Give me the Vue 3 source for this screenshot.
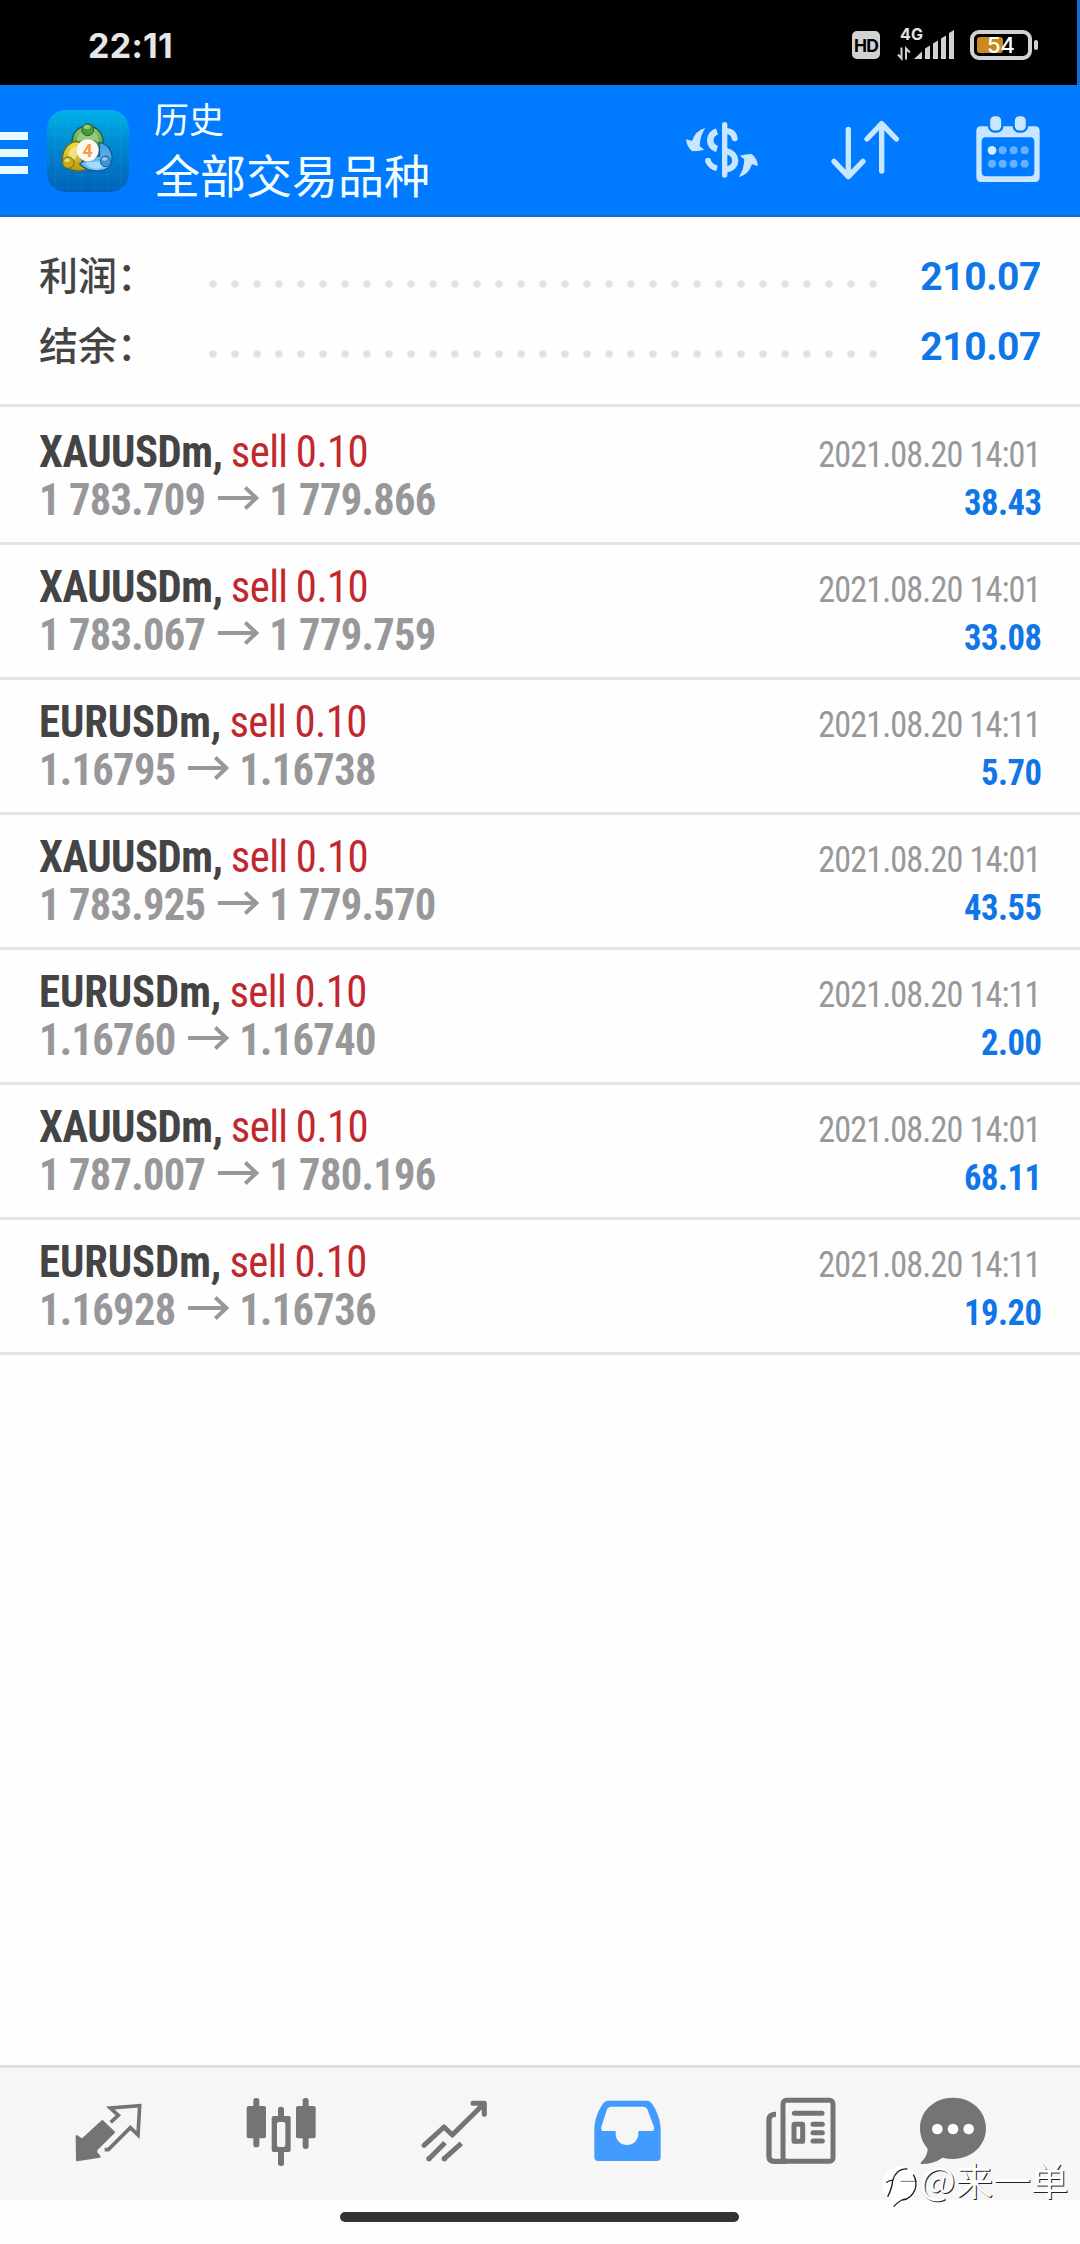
<script setup>
const totals = [
  { label: '利润：', value: '210.07' },
  { label: '结余：', value: '210.07' },
]
const deals = [
  { symbol: 'XAUUSDm', open: '1 783.709', close: '1 779.866', time: '2021.08.20 14:01', profit: '38.43' },
  { symbol: 'XAUUSDm', open: '1 783.067', close: '1 779.759', time: '2021.08.20 14:01', profit: '33.08' },
  { symbol: 'EURUSDm', open: '1.16795', close: '1.16738', time: '2021.08.20 14:11', profit: '5.70' },
  { symbol: 'XAUUSDm', open: '1 783.925', close: '1 779.570', time: '2021.08.20 14:01', profit: '43.55' },
  { symbol: 'EURUSDm', open: '1.16760', close: '1.16740', time: '2021.08.20 14:11', profit: '2.00' },
  { symbol: 'XAUUSDm', open: '1 787.007', close: '1 780.196', time: '2021.08.20 14:01', profit: '68.11' },
  { symbol: 'EURUSDm', open: '1.16928', close: '1.16736', time: '2021.08.20 14:11', profit: '19.20' },
]
const gridX = [168, 207, 246, 285, 324, 363]
const gridY = [97, 136, 175, 214, 253, 292]
</script>

<template>
  <div class="screen">
    <div class="status">
      <span class="clock">22:11</span>
      <div class="status-right">
        <span class="hd">HD</span>
        <svg class="signal" width="60" height="42" viewBox="897 19 60 42">
          <text x="900" y="40.2" font-size="16" font-weight="700" fill="#e4e4e4" textLength="23">4G</text>
          <g fill="none" stroke="#d2d2d2" stroke-width="2">
            <path d="M901.5 47.5V58.5L898 54.5" />
            <path d="M906 59.500V48.500L909.800 52.500" />
          </g>
          <g fill="#d2d2d2">
            <path d="M914 59L922 51.500V59Z" />
            <path d="M925 59V48.500L930 45.500V59Z" />
            <path d="M933 59V43.500L938 40.500V59Z" />
            <path d="M941 59V38.500L946 35.500V59Z" />
            <path d="M949 59V33L954 30V59Z" />
          </g>
        </svg>
        <div class="battery">
          <i class="charge"></i>
          <span class="level">54</span>
        </div>
        <i class="nub"></i>
      </div>
    </div>

    <header class="bar">
      <div class="menu"><i></i><i></i><i></i></div>
      <svg class="logo" width="82" height="82" viewBox="142 60 246 246">
        <defs>
          <linearGradient id="bg" x1="0" y1="0" x2="0" y2="1">
            <stop offset="0" stop-color="#00b0ea" />
            <stop offset=".5" stop-color="#0083cc" />
            <stop offset="1" stop-color="#0061b6" />
          </linearGradient>
          <linearGradient id="green" x1="0" y1="0" x2="0" y2="1">
            <stop offset="0" stop-color="#9ccf78" /><stop offset="1" stop-color="#2f8a2a" />
          </linearGradient>
          <linearGradient id="gold" x1="0" y1="0" x2="0" y2="1">
            <stop offset="0" stop-color="#f0dc4a" /><stop offset="1" stop-color="#b99a10" />
          </linearGradient>
          <linearGradient id="sky" x1="0" y1="0" x2="0" y2="1">
            <stop offset="0" stop-color="#3f9be0" /><stop offset="1" stop-color="#7cc4f4" />
          </linearGradient>
        </defs>
        <rect x="142" y="60" width="246" height="246" rx="56" fill="url(#bg)" />
        <g stroke="#5ad2f4" stroke-opacity=".15" stroke-width="2">
          <path v-for="x in gridX" :key="'x' + x" :d="`M${x} 66V300`" />
          <path v-for="y in gridY" :key="'y' + y" :d="`M148 ${y}H382`" />
        </g>
        <path d="M217 172C213 124 240 108 264 108S314 126 311 168L300 186H228Z" fill="url(#green)" stroke="#1d5d43" stroke-width="4" />
        <path d="M231 160C229 132 246 124 264 124S298 132 298 156L284 150H246Z" fill="#8fcb80" />
        <path d="M240 156C220 150 186 166 188 214C196 238 232 250 262 238L244 206Z" fill="url(#gold)" stroke="#6b6a1e" stroke-width="4" />
        <path d="M206 202C204 178 220 168 234 168L236 190L224 210Z" fill="#f2e47a" />
        <path d="M298 158C326 158 342 190 336 218C328 246 272 254 240 222L262 206L300 198Z" fill="url(#sky)" stroke="#17588f" stroke-width="4" />
        <path d="M256 220C270 238 296 240 310 230L300 214L268 216Z" fill="#a8d9f8" />
        <circle cx="264" cy="119" r="18" fill="#4c9a35" stroke="#24652b" stroke-width="3" />
        <ellipse cx="262" cy="111" rx="10" ry="6" fill="#bfe3a6" opacity=".7" />
        <circle cx="206" cy="218" r="17" fill="#c9ab1c" stroke="#75690f" stroke-width="3" />
        <ellipse cx="202" cy="211" rx="8" ry="6" fill="#f6ec98" opacity=".7" />
        <circle cx="318" cy="214" r="16" fill="#3c93d8" stroke="#1c5f9e" stroke-width="3" />
        <ellipse cx="315" cy="207" rx="8" ry="5" fill="#bfe3fa" opacity=".7" />
        <circle cx="264" cy="181" r="33" fill="#fbf8f2" />
        <text x="264" y="200" font-size="53" font-weight="700" text-anchor="middle" fill="#f59a45">4</text>
      </svg>
      <div class="titles">
        <div class="title">历史</div>
        <div class="subtitle">全部交易品种</div>
      </div>
      <div class="actions">
        <svg width="80" height="60" viewBox="66 89 240 180" fill="none" stroke="#c9e6ff">
          <path d="M194 103V254" stroke-width="16" stroke-linecap="round" />
          <path d="M171 123C144 132 144 168 171 176" stroke-width="20" />
          <path d="M200 122C213 123 222 131 224 144" stroke-width="18" stroke-linecap="round" />
          <path d="M144 211C148 222 156 230 171 234" stroke-width="17" />
          <circle cx="144" cy="211" r="8.500" fill="#c9e6ff" stroke="none" />
          <path d="M198 182C235 190 235 232 198 238" stroke-width="19" />
          <g fill="#c9e6ff" stroke="none">
            <path d="M136 113Q106 121 96 152L78 147Q80 170 97 183Q115 183 133 178L119 167Q120 136 136 113Z" />
            <path d="M136 113Q106 121 96 152L78 147Q80 170 97 183Q115 183 133 178L119 167Q120 136 136 113Z" transform="rotate(180 186 187)" />
          </g>
        </svg>
        <svg width="80" height="66" viewBox="495 85 240 198" fill="none" stroke="#c9e6ff" stroke-width="16" stroke-linecap="round" stroke-linejoin="round">
          <path d="M565 119V260M522 215L565 261L609 215" />
          <path d="M665 244V103M621 148L665 102L709 148" />
        </svg>
        <svg width="70" height="72" viewBox="1000 340 210 216">
          <path fill="#c9e6ff" fill-rule="evenodd" d="M1024 380H1186Q1200 380 1200 394V533Q1200 547 1186 547H1024Q1010 547 1010 533V394Q1010 380 1024 380ZM1039 413Q1026 413 1026 426V517Q1026 530 1039 530H1171Q1184 530 1184 517V426Q1184 413 1171 413Z" />
          <g fill="#c9e6ff" stroke="#007aff" stroke-width="7">
            <rect x="1048" y="346" width="40" height="50" rx="17" />
            <rect x="1122" y="346" width="40" height="50" rx="17" />
          </g>
          <g fill="#66b0ff">
            <circle cx="1057" cy="452" r="13" fill="#d8eeff" />
            <circle cx="1089" cy="452" r="12" /><circle cx="1122" cy="452" r="12" /><circle cx="1155" cy="452" r="12" />
            <circle cx="1057" cy="492" r="12" /><circle cx="1089" cy="492" r="12" /><circle cx="1122" cy="492" r="12" /><circle cx="1155" cy="492" r="12" />
          </g>
        </svg>
      </div>
    </header>

    <section class="totals">
      <div v-for="t in totals" :key="t.label" class="total">
        <span class="total-label">{{ t.label }}</span>
        <span class="leader"></span>
        <span class="total-value">{{ t.value }}</span>
      </div>
    </section>

    <main class="deals">
      <div v-for="(d, i) in deals" :key="i" class="deal">
        <div class="left">
          <div class="line name" :class="d.symbol.toLowerCase()"><b>{{ d.symbol }},</b> <span class="side">sell 0.10</span></div>
          <div class="line prices">
            <span>{{ d.open }}</span>
            <svg class="arrow" width="43" height="26" viewBox="0 0 43 26" fill="none" stroke="#98989a" stroke-width="4">
              <path d="M0 13H40M28.500 2.500L40 13L28.500 23.500" />
            </svg>
            <span>{{ d.close }}</span>
          </div>
        </div>
        <div class="right">
          <div class="time">{{ d.time }}</div>
          <div class="profit">{{ d.profit }}</div>
        </div>
      </div>
    </main>

    <nav class="tabs">
      <svg viewBox="177 54 300 396">
        <path fill="#747474" stroke="#747474" stroke-width="6" stroke-linejoin="round" d="M307 213L342 247L289 299V308L299 320L231 331L230 258L246 269Z" />
        <path fill="none" stroke="#747474" stroke-width="11" d="M332 217L355 196L331 174L419 167L414 255L391 233L325 299H314" />
      </svg>
      <svg viewBox="696 54 300 396" fill="#747474">
        <rect x="760" y="144" width="18" height="148" rx="8" /><rect x="740" y="168" width="58" height="97" rx="6" />
        <rect x="908" y="144" width="18" height="153" rx="8" /><rect x="888" y="168" width="59" height="97" rx="6" />
        <rect x="834" y="170" width="18" height="178" rx="8" /><rect x="815" y="198" width="57" height="108" rx="6" />
        <rect x="831" y="216" width="25" height="75" rx="6" fill="#f6f6f6" />
      </svg>
      <svg viewBox="135 54 300 396" fill="none" stroke="#747474" stroke-width="15">
        <path stroke-linecap="round" stroke-linejoin="round" d="M192 286L252 231L277 255L371 162M339 160H373V193" />
        <path d="M207 326L255 278M253 326L304 280" />
        <g fill="#747474" stroke="none"><circle cx="207" cy="326" r="8" /><circle cx="253" cy="326" r="8" /></g>
      </svg>
      <svg viewBox="654 54 300 396">
        <path fill="#429bff" fill-rule="evenodd" d="M744 152H862Q870 152 876 161C896 190 902 218 902 240V321Q902 333 890 333H715Q703 333 703 321V240C703 212 712 185 730 160Q736 152 744 152ZM752 170Q745 170 741 178L724 231Q722 243 730 243H767V251A34 34 0 0 0 835 251V243H876Q884 243 882 231L862 178Q858 170 851 170Z" />
      </svg>
      <svg viewBox="93 54 300 396" fill="none" stroke="#747474">
        <rect x="189" y="151" width="150" height="183" rx="10" stroke-width="15" />
        <path stroke-width="16" d="M168 193Q147 192 147 210V318Q147 334 163 334H200" />
        <path stroke-width="15" stroke-linecap="round" d="M223 190H306" />
        <path stroke-width="15" stroke-linecap="round" d="M279 223H307M279 248H307M279 273H307" />
        <rect x="222" y="223" width="26" height="51" rx="2" stroke-width="15" />
      </svg>
      <svg class="chat" viewBox="549 54 300 396">
        <path fill="#747474" d="M699 143C755 143 798 183 798 235C798 287 755 327 699 327Q682 327 668 323Q640 342 605 342Q599 341 604 335Q622 320 623 296C609 280 600 259 600 235C600 183 643 143 699 143Z" />
        <g fill="#fff"><circle cx="652" cy="237" r="16" /><circle cx="699" cy="237" r="16" /><circle cx="746" cy="237" r="16" /></g>
      </svg>
    </nav>
    <div class="gesture"><i></i></div>

    <div class="watermark">
      <svg width="40" height="46" viewBox="480 342 120 138">
        <circle cx="540" cy="402" r="54" fill="#fff" />
        <g fill="none" stroke="#1c1c1c" stroke-width="4">
          <path d="M499 398Q506 390 518 391Q516 416 503 440" />
          <path d="M518 391Q530 354 562 357" />
          <path d="M542 394H590" stroke="#777" stroke-width="3" />
          <path d="M580 374Q592 394 586 416Q574 448 546 450Q532 456 521 470" />
        </g>
      </svg>
      <span>@来一单</span>
    </div>
  </div>
</template>

<style>
body {
  margin: 0;
  background: #fefefe;
}
</style>

<style scoped>
.screen {
  position: relative;
  display: flex;
  flex-direction: column;
  width: 1080px;
  height: 2244px;
  overflow: hidden;
  background: #fefefe;
  font-family: Roboto, "Noto Sans CJK SC", sans-serif;
}
svg { display: block; flex: none; }
.status {
  box-sizing: border-box;
  display: flex;
  justify-content: space-between;
  height: 85px;
  padding: 27px 39px 0 88px;
  border-right: 3px solid #0d6fd8;
  background: #000;
}
.clock {
  color: #e6e6e6;
  font: 700 34px/38px Inter, sans-serif;
  letter-spacing: 0.3px;
}
.status-right { display: flex; align-items: flex-start; }
.hd {
  width: 28px;
  height: 28px;
  margin: 4px 17px 0 0;
  border-radius: 5px;
  background: #d2d2d2;
  color: #000;
  font: 700 17.5px/29px Inter, sans-serif;
  text-align: center;
  letter-spacing: -0.8px;
}
.signal { margin-top: -8px; font-family: Inter, sans-serif; }
.battery {
  position: relative;
  box-sizing: border-box;
  display: flex;
  align-items: center;
  width: 62px;
  height: 30px;
  margin: 3px 2px 0 13px;
  padding-left: 3px;
  border: 4px solid #d2d2d2;
  border-radius: 9px;
}
.charge { width: 26px; height: 16px; border-radius: 3px; background: #cb8a20; }
.level {
  position: absolute;
  inset: 0;
  color: #fff;
  font: 500 22px/23px Inter, sans-serif;
  text-align: center;
}
.nub { width: 4px; height: 10px; margin-top: 13px; border-radius: 2px; background: #d2d2d2; }
.bar {
  box-sizing: border-box;
  display: flex;
  height: 132px;
  border-bottom: 2px solid #1a6dc4;
  background: #007aff;
}
.menu { display: flex; flex-direction: column; gap: 9px; width: 28px; margin: 47px 19px 0 0; }
.menu i { height: 8px; background: #e8fbff; }
.logo { margin: 25px 25px 0 0; }
.titles { flex: 1; color: #f2fdff; font-family: "Noto Sans CJK SC", sans-serif; white-space: nowrap; }
.title { margin-top: 11px; font-size: 35px; line-height: 44px; }
.subtitle { font-size: 46px; line-height: 66px; }
.actions { display: flex; padding-right: 37px; }
.actions svg:nth-child(1) { margin: 35px 63px 0 0; }
.actions svg:nth-child(2) { margin: 33px 68px 0 0; }
.actions svg:nth-child(3) { margin: 28px 0 0; }
.totals {
  box-sizing: border-box;
  height: 190px;
  padding: 24px 39px 0;
  border-bottom: 3px solid #e3e3e3;
}
.total { display: flex; height: 70px; line-height: 72px; }
.total-label { width: 163px; color: #444; font: 500 39px/65px "Noto Sans CJK SC", sans-serif; }
.leader {
  width: 682px;
  height: 8px;
  margin-top: 39px;
  background: radial-gradient(circle at 11px 4px, #e2e2e2 3.3px, transparent 4.2px) 0 0 / 22px 8px repeat-x;
}
.total-value {
  flex: 1;
  color: #1076e8;
  font-size: 39px;
  font-weight: 700;
  text-align: right;
  letter-spacing: -0.4px;
}
.deals { flex: 1; padding-top: 3px; }
.deal {
  box-sizing: border-box;
  display: flex;
  justify-content: space-between;
  height: 135px;
  padding: 18px 39px 0;
  border-bottom: 3px solid #e3e3e3;
  font-family: "Roboto Condensed", Roboto, sans-serif;
  font-stretch: 75%;
  white-space: nowrap;
}
.line { color: #444; font-size: 44px; line-height: 48px; transform-origin: left; }
.name { letter-spacing: -0.6px; word-spacing: -1px; transform: scaleX(0.972); }
.name b { letter-spacing: -0.5px; }
.name.eurusdm b { letter-spacing: -0.1px; }
.side { color: #c1272d; }
.prices {
  display: flex;
  gap: 13px;
  color: #98989a;
  font-weight: 700;
  letter-spacing: -0.7px;
  transform: scaleX(0.966);
}
.arrow { margin: 9px -3px 0 0; }
.right { padding-top: 3px; text-align: right; font-size: 36px; line-height: 48px; }
.time { color: #98989a; letter-spacing: -0.9px; transform: scaleX(0.948); transform-origin: right; }
.profit {
  margin-right: -1px;
  color: #1076e8;
  font-weight: 700;
  letter-spacing: -0.5px;
  transform: scaleX(0.96);
  transform-origin: right;
}
.tabs {
  box-sizing: border-box;
  display: flex;
  gap: 73px;
  height: 135px;
  padding-left: 59px;
  border-top: 3px solid #e0e0e0;
  background: #f6f6f6;
}
.tabs svg { width: 100px; height: 132px; }
.tabs .chat { margin-left: -21px; }
.gesture { display: flex; height: 44px; padding-left: 340px; }
.gesture i { width: 399px; height: 10px; margin-top: 12px; border-radius: 5px; background: #333; }
.watermark {
  position: absolute;
  left: 880px;
  top: 2164px;
  display: flex;
  color: #fff;
  font: 37.6px/38px "Noto Sans CJK SC", sans-serif;
  text-shadow: 1px 1px 0 #222;
  white-space: nowrap;
}
.watermark span { margin-top: -4px; }
</style>
